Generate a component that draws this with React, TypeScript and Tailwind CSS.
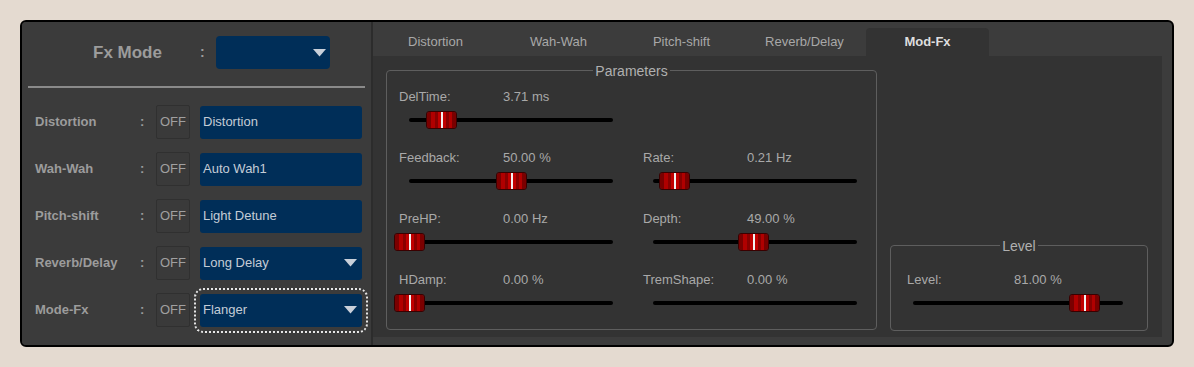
import React from 'react';

const font = { fontFamily: '"Liberation Sans", Arial, sans-serif' };

type Row = { label: string; value: string; dropdown?: boolean; focused?: boolean };

const rows: Row[] = [
  { label: 'Distortion', value: 'Distortion' },
  { label: 'Wah-Wah', value: 'Auto Wah1' },
  { label: 'Pitch-shift', value: 'Light Detune' },
  { label: 'Reverb/Delay', value: 'Long Delay', dropdown: true },
  { label: 'Mode-Fx', value: 'Flanger', dropdown: true, focused: true },
];

const tabs = ['Distortion', 'Wah-Wah', 'Pitch-shift', 'Reverb/Delay', 'Mod-Fx'];

function Caret() {
  return (
    <svg width="13" height="8" viewBox="0 0 13 8" className="shrink-0">
      <path d="M0 0 H13 L6.5 7.5 Z" fill="#c9d0da" />
    </svg>
  );
}

function Handle({ left }: { left: number }) {
  return (
    <div
      className="absolute top-1/2 -translate-y-1/2 h-[18px] w-[31px] rounded-[3px] border border-[#3a0000] flex overflow-hidden"
      style={{ left: left - 15.5 }}
    >
      <div className="w-[4px] bg-[#7a0000]" />
      <div className="w-[4px] bg-[#b00000]" />
      <div className="w-[3px] bg-[#880000]" />
      <div className="w-[3px] bg-[#c00000]" />
      <div className="w-[2px] bg-[#f2f2f2]" />
      <div className="w-[3px] bg-[#c00000]" />
      <div className="w-[3px] bg-[#880000]" />
      <div className="w-[3px] bg-[#b00000]" />
      <div className="flex-1 bg-[#7a0000]" />
    </div>
  );
}

function Slider({
  label,
  value,
  frac,
  width = 204,
  valueGap = 104,
  trackInset = 10,
  showHandle = true,
}: {
  label: string;
  value: string;
  frac: number;
  width?: number;
  valueGap?: number;
  trackInset?: number;
  showHandle?: boolean;
}) {
  return (
    <div className="flex flex-col">
      <div className="flex h-[18px] items-center text-[13px] text-[#a9a9a9]">
        <span style={{ width: valueGap }}>{label}</span>
        <span>{value}</span>
      </div>
      <div className="relative mt-[12px] h-[4px] rounded-full bg-black" style={{ width, marginLeft: trackInset }}>
        {showHandle && <Handle left={frac * width} />}
      </div>
    </div>
  );
}

function GroupBox({ title, className, children }: { title: string; className: string; children: React.ReactNode }) {
  return (
    <div className={`relative rounded-[4px] border border-[#5e5e5e] ${className}`}>
      <div className="absolute -top-[10px] left-0 right-0 flex justify-center">
        <span className="bg-[#333333] px-[2px] text-[14px] text-[#b0b0b0]">{title}</span>
      </div>
      {children}
    </div>
  );
}

export default function App() {
  return (
    <div className="h-[367px] w-[1194px] bg-[#e4dad0] p-[20px]" style={font}>
      <div className="flex h-[327px] overflow-hidden rounded-[6px] border-2 border-black bg-[#3c3c3c]">
        {/* Left panel */}
        <div className="flex w-[349px] flex-col bg-[#3b3b3b] px-[6px]">
          <div className="mt-[14px] flex h-[33px] items-center">
            <span className="ml-[65px] w-[107px] text-[17px] font-bold text-[#9c9c9c]">Fx Mode</span>
            <span className="w-[16px] text-[14px] font-bold text-[#9c9c9c]">:</span>
            <div className="flex h-[33px] w-[114px] items-center justify-end rounded-[4px] bg-[#002e58] pr-[4px]">
              <Caret />
            </div>
          </div>
          <div className="mt-[17px] h-[2px] bg-[#8a8a8a]" />
          <div className="mt-[17px] flex flex-col gap-[13px]">
            {rows.map((r) => (
              <div key={r.label} className="flex h-[34px] items-center">
                <span className="ml-[7px] w-[105px] text-[13px] font-bold text-[#9c9c9c]">{r.label}</span>
                <span className="w-[16px] text-[13px] font-bold text-[#9c9c9c]">:</span>
                <div className="flex h-[34px] w-[34px] items-center justify-center rounded-[2px] border border-[#303030] bg-[#3a3a3a] text-[13px] text-[#a0a0a0]">
                  OFF
                </div>
                <div
                  className={`ml-[10px] flex h-[33px] w-[162px] items-center justify-between rounded-[3px] bg-[#002e58] pl-[3px] pr-[5px] text-[13px] text-[#c4ccd6] ${
                    r.focused ? 'outline-2 outline-dotted outline-offset-[4px] outline-[#e6e6e6]' : ''
                  }`}
                >
                  <span>{r.value}</span>
                  {r.dropdown && <Caret />}
                </div>
              </div>
            ))}
          </div>
        </div>

        {/* Divider */}
        <div className="w-[2px] bg-[#2c2c2c]" />

        {/* Right panel */}
        <div className="flex flex-1 flex-col">
          <div className="flex h-[34px] items-end pl-[1px]">
            {tabs.map((t) => {
              const active = t === 'Mod-Fx';
              return (
                <div
                  key={t}
                  className={`flex h-[28px] w-[123px] items-center justify-center text-[13px] ${
                    active ? 'rounded-t-[4px] bg-[#333333] font-bold text-[#dedede]' : 'text-[#a8a8a8]'
                  }`}
                >
                  {t}
                </div>
              );
            })}
          </div>
          <div className="mb-[8px] mr-[10px] flex flex-1 gap-[13px] bg-[#333333] pl-[13px] pt-[14px]">
            <GroupBox title="Parameters" className="h-[260px] w-[491px] pl-[12px] pt-[17px]">
              <div className="grid grid-cols-[244px_1fr] gap-y-[27px]">
                <Slider label="DelTime:" value="3.71 ms" frac={0.157} />
                <div />
                <Slider label="Feedback:" value="50.00 %" frac={0.5} />
                <Slider label="Rate:" value="0.21 Hz" frac={0.103} />
                <Slider label="PreHP:" value="0.00 Hz" frac={0} />
                <Slider label="Depth:" value="49.00 %" frac={0.495} />
                <Slider label="HDamp:" value="0.00 %" frac={0} />
                <Slider label="TremShape:" value="0.00 %" frac={0} showHandle={false} />
              </div>
            </GroupBox>
            <div className="flex flex-col justify-end pb-[6px]">
              <GroupBox title="Level" className="h-[86px] w-[258px] pl-[16px] pt-[25px]">
                <Slider label="Level:" value="81.00 %" frac={0.819} width={210} valueGap={107} trackInset={6} />
              </GroupBox>
            </div>
          </div>
        </div>
      </div>
    </div>
  );
}
